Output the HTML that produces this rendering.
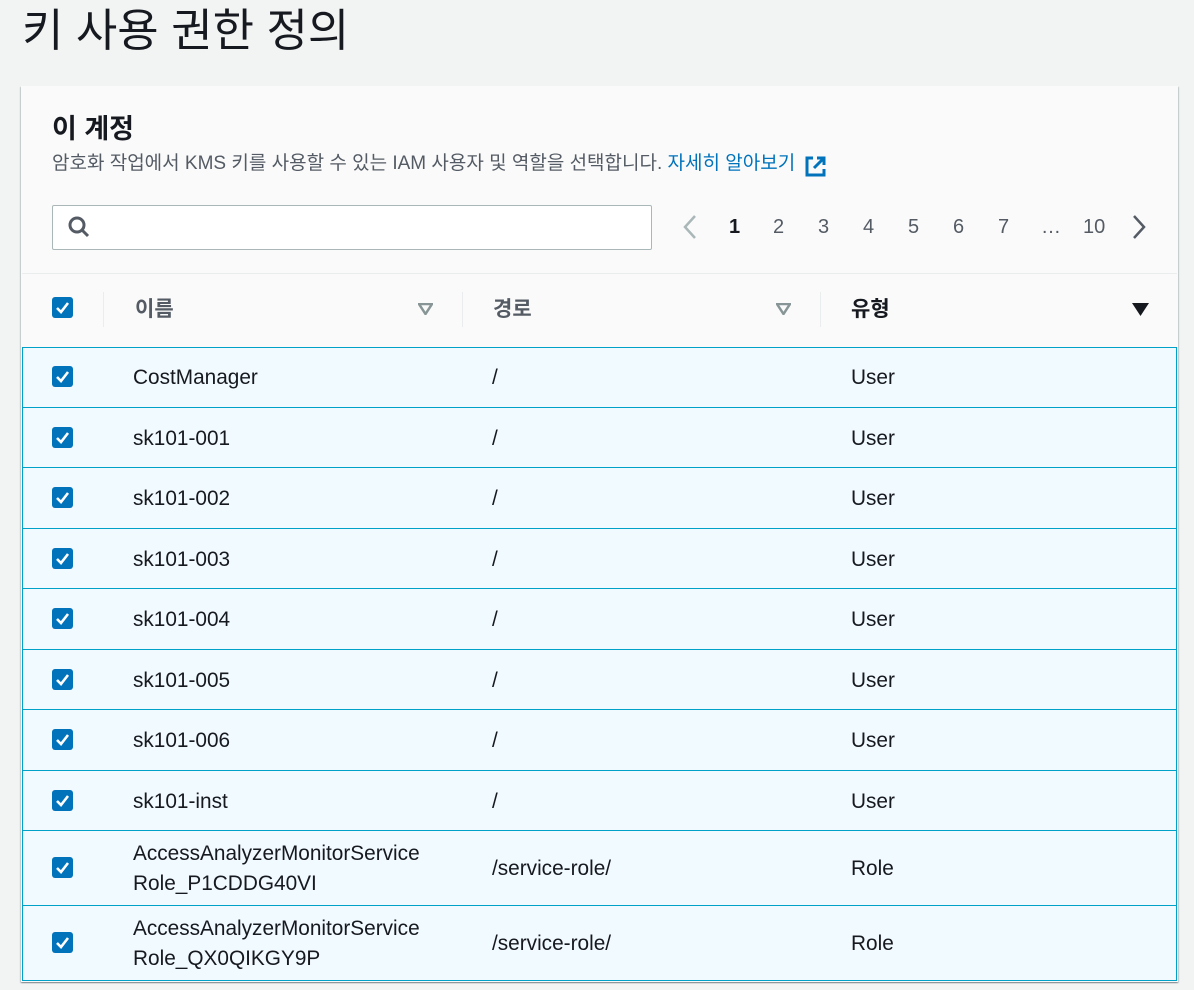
<!DOCTYPE html>
<html><head><meta charset="utf-8"><style>
*{margin:0;padding:0;box-sizing:border-box}
body{width:1194px;height:990px;background:#f2f3f3;position:relative;overflow:hidden;font-family:"Liberation Sans","Noto Sans CJK KR",sans-serif;color:#16191f}
.a{position:absolute;white-space:nowrap}
.panel{position:absolute;left:21px;top:86px;width:1157px;height:896px;background:#fafafa;box-shadow:0 1px 1px rgba(0,28,36,.3),1px 1px 1px rgba(0,28,36,.15),-1px 1px 1px rgba(0,28,36,.15)}
.cb{position:absolute;left:52px;width:21px;height:21px;background:#0073bb;border-radius:3px}
.cb svg{position:absolute;left:3px;top:3px}
.row{position:absolute;left:22px;width:1155px;background:#f1faff;border:1px solid #00a1c9}
.pg{position:absolute;top:216px;font-size:20px;color:#545b64}
.t{font-size:20.8px;line-height:30px}
</style></head><body>
<div class="a" style="left:22px;top:4px;font-size:45px;line-height:54px;">키 사용 권한 정의</div>
<div class="panel"></div>
<div class="a" style="left:52px;top:111px;font-size:27px;font-weight:bold;line-height:36px">이 계정</div>
<div class="a" style="left:52px;top:151px;font-size:19px;line-height:26px;color:#545b64">암호화 작업에서 KMS 키를 사용할 수 있는 IAM 사용자 및 역할을 선택합니다. <span style="color:#0073bb">자세히 알아보기</span></div>
<svg class="a" style="left:804px;top:155px" width="23" height="23" viewBox="0 0 23 23" fill="none" stroke="#0073bb" stroke-width="3"><path d="M9 3H3v17h17v-6"/><path d="M13 3h7v7M20 3L10 13"/></svg>
<div class="a" style="left:52px;top:205px;width:600px;height:45px;background:#fff;border:1px solid #aab7b8;border-radius:2px"></div>
<svg class="a" style="left:67px;top:215px" width="25" height="25" viewBox="0 0 25 25" fill="none" stroke="#545b64" stroke-width="3"><circle cx="10" cy="10" r="7"/><path d="M15 15l6 6"/></svg>
<svg class="a" style="left:682px;top:214px" width="16" height="26" viewBox="0 0 16 26" fill="none" stroke="#aab7b8" stroke-width="2.5"><path d="M13 2L3 13l10 11"/></svg>
<div class="pg" style="left:729px;color:#16191f;font-weight:bold">1</div>
<div class="pg" style="left:773px">2</div>
<div class="pg" style="left:818px">3</div>
<div class="pg" style="left:863px">4</div>
<div class="pg" style="left:908px">5</div>
<div class="pg" style="left:953px">6</div>
<div class="pg" style="left:998px">7</div>
<div class="pg" style="left:1041px">…</div>
<div class="pg" style="left:1083px">10</div>
<svg class="a" style="left:1131px;top:214px" width="16" height="26" viewBox="0 0 16 26" fill="none" stroke="#545b64" stroke-width="2.5"><path d="M3 2l10 11L3 24"/></svg>
<div class="a" style="left:22px;top:273px;width:1155px;border-top:1px solid #eaeded"></div>
<div class="cb" style="top:297px"><svg width="15" height="15" viewBox="0 0 15 15" fill="none" stroke="#fff" stroke-width="2.6"><path d="M2 8l4 4 7-9"/></svg></div>
<div class="a" style="left:103px;top:292px;height:35px;border-left:1px solid #eaeded"></div>
<div class="a" style="left:462px;top:292px;height:35px;border-left:1px solid #eaeded"></div>
<div class="a" style="left:820px;top:292px;height:35px;border-left:1px solid #eaeded"></div>
<div class="a" style="left:135px;top:293px;font-size:21px;font-weight:bold;color:#545b64">이름</div>
<div class="a" style="left:493px;top:293px;font-size:21px;font-weight:bold;color:#545b64">경로</div>
<div class="a" style="left:851px;top:293px;font-size:21px;font-weight:bold">유형</div>
<svg class="a" style="left:418px;top:303px" width="15" height="12" viewBox="0 0 15 12"><path d="M1 1h13L7.5 11z" fill="none" stroke="#879596" stroke-width="2.5"/></svg>
<svg class="a" style="left:776px;top:303px" width="15" height="12" viewBox="0 0 15 12"><path d="M1 1h13L7.5 11z" fill="none" stroke="#879596" stroke-width="2.5"/></svg>
<svg class="a" style="left:1132px;top:303px" width="17" height="13" viewBox="0 0 17 13"><path d="M0 0h17L8.5 13z" fill="#16191f"/></svg>

<div class="row" style="top:347px;height:61px"></div><div class="row" style="top:407px;height:61px"></div><div class="row" style="top:467px;height:62px"></div><div class="row" style="top:528px;height:61px"></div><div class="row" style="top:588px;height:62px"></div><div class="row" style="top:649px;height:61px"></div><div class="row" style="top:709px;height:62px"></div><div class="row" style="top:770px;height:61px"></div><div class="row" style="top:830px;height:76px"></div><div class="row" style="top:905px;height:76px"></div>

<div id="cells"></div>
<script>
var d=[["CostManager","/","User",378],["sk101-001","/","User",439],["sk101-002","/","User",499],["sk101-003","/","User",560],["sk101-004","/","User",620],["sk101-005","/","User",681],["sk101-006","/","User",741],["sk101-inst","/","User",802],["AccessAnalyzerMonitorService<br>Role_P1CDDG40VI","/service-role/","Role",869],["AccessAnalyzerMonitorService<br>Role_QX0QIKGY9P","/service-role/","Role",944]];
var h="";d.forEach(function(r){var c=r[3];var two=r[0].indexOf("<br>")>0;
h+='<div class="cb" style="top:'+(c-12)+'px"><svg width="15" height="15" viewBox="0 0 15 15" fill="none" stroke="#fff" stroke-width="2.6"><path d="M2 8l4 4 7-9"/></svg></div>';
h+='<div class="a t" style="left:133px;top:'+(two?c-30:c-15)+'px">'+r[0]+'</div>';
h+='<div class="a t" style="left:492px;top:'+(c-15)+'px">'+r[1]+'</div>';
h+='<div class="a t" style="left:851px;top:'+(c-15)+'px">'+r[2]+'</div>';});
document.getElementById("cells").innerHTML=h;
</script>
</body></html>
